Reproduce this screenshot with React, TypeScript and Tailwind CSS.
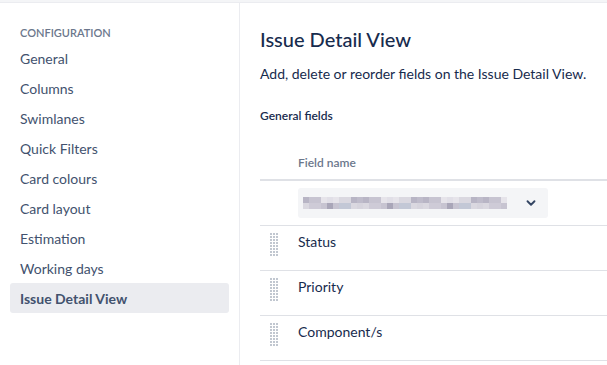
import React from "react"

const navItems = [
  "General",
  "Columns",
  "Swimlanes",
  "Quick Filters",
  "Card colours",
  "Card layout",
  "Estimation",
  "Working days",
  "Issue Detail View",
]

const fields = ["Status", "Priority", "Component/s"]

// pixelated placeholder for the blurred value in the select
const shades = ["#d6d4dd", "#c7c4d1", "#e1dfe7", "#b8b5c5", "#cecbd7", "#a9a6b8", "#dad8e0", "#bfbccb", "#e6e4ea", "#c3c8d6"]
const blurRow = (seed: number) =>
  Array.from({ length: 34 }, (_, i) => shades[(i * 7 + seed * 3 + ((i * i) % 5)) % shades.length])

function DragHandle() {
  const dots = []
  for (let r = 0; r < 8; r++) {
    for (let c = 0; c < 3; c++) {
      dots.push(<rect key={`${r}-${c}`} x={c * 3} y={r * 3} width="2" height="2" fill="#c1c7d0" />)
    }
  }
  return (
    <svg width="9" height="23" viewBox="0 0 9 23">
      {dots}
    </svg>
  )
}

export default function App() {
  return (
    <div className="w-[607px] h-[365px] overflow-hidden bg-white flex flex-col" style={{ fontFamily: "Lato, 'Liberation Sans', sans-serif" }}>
      <div className="h-[3px] bg-[#f4f5f7] border-b border-[#ebecf0]" />
      <div className="flex flex-1">
        {/* Sidebar */}
        <div className="w-[240px] shrink-0 border-r border-[#ebecf0] pl-[10px] pr-[10px] pt-[20px]">
          <div className="pl-[10px] text-[11px] leading-[20px] text-[#6b778c] font-semibold uppercase">Configuration</div>
          <div className="flex flex-col">
            {navItems.map((item) => (
              <div
                key={item}
                className={
                  item === "Issue Detail View"
                    ? "h-[30px] px-[10px] flex items-center rounded-[3px] bg-[#ebecf0] text-[14px] font-bold text-[#42526e]"
                    : "h-[30px] px-[10px] flex items-center text-[14px] text-[#42526e]"
                }
              >
                {item}
              </div>
            ))}
          </div>
        </div>

        {/* Main */}
        <div className="flex-1 pl-[20px] pt-[24px]">
          <h1 className="text-[20px] leading-[24px] text-[#172b4d] font-medium">Issue Detail View</h1>
          <p className="mt-[13px] text-[14px] leading-[20px] text-[#172b4d]">Add, delete or reorder fields on the Issue Detail View.</p>
          <div className="mt-[24px] text-[12px] leading-[16px] font-semibold text-[#172b4d]">General fields</div>

          <div className="mt-[23px]">
            <div className="h-[34px] pl-[38px] flex items-center text-[12px] font-semibold text-[#6b778c] border-b-2 border-[#dfe1e6]">
              Field name
            </div>
            <div className="h-[45px] pl-[38px] pt-[7px] border-b border-[#dfe1e6]">
              <div className="w-[250px] h-[30px] rounded-[3px] bg-[#f4f5f7] flex items-center pl-[5px] pr-[8px]">
                <div className="flex flex-col">
                  <div className="flex">
                    {blurRow(1).map((c, i) => (
                      <span key={i} className="w-[6px] h-[6px]" style={{ backgroundColor: c }} />
                    ))}
                  </div>
                  <div className="flex">
                    {blurRow(2).map((c, i) => (
                      <span key={i} className="w-[6px] h-[6px]" style={{ backgroundColor: c }} />
                    ))}
                  </div>
                </div>
                <svg className="ml-auto mr-[2px]" width="14" height="14" viewBox="0 0 24 24" fill="none" stroke="#344563" strokeWidth="3.2" strokeLinecap="round" strokeLinejoin="round">
                  <path d="M6 9l6 6 6-6" />
                </svg>
              </div>
            </div>
            {fields.map((f) => (
              <div key={f} className="h-[45px] flex items-start pt-[6px] border-b border-[#dfe1e6]">
                <div className="w-[38px] pl-[10px] pt-[1px] flex">
                  <DragHandle />
                </div>
                <span className="text-[14px] leading-[20px] text-[#172b4d]">{f}</span>
              </div>
            ))}
          </div>
        </div>
      </div>
    </div>
  )
}
